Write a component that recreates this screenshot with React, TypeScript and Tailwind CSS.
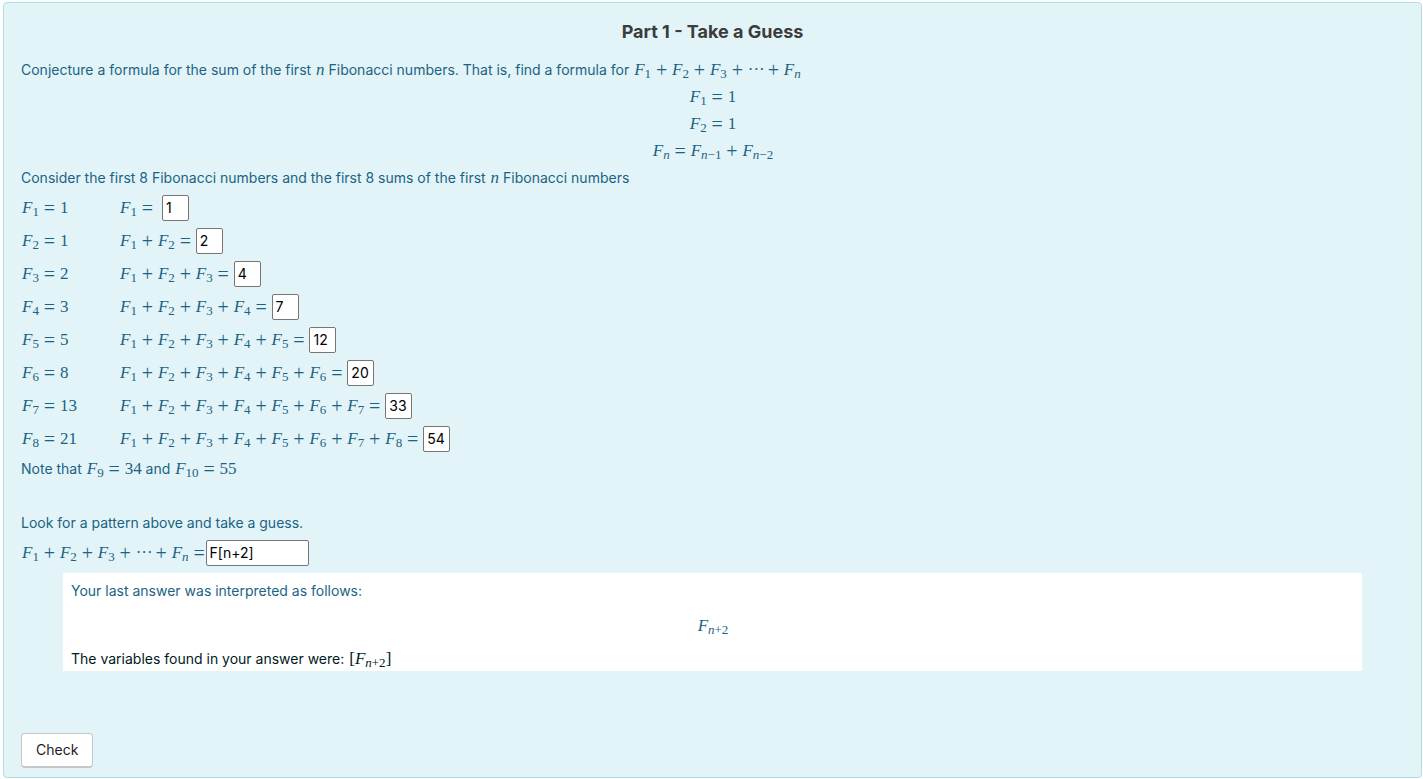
import { Fragment, useState, FormEvent, ReactNode } from "react";

const FIBONACCI = [1, 1, 2, 3, 5, 8, 13, 21];

function Op({ children }: { children: ReactNode }) {
  return (
    <span className="inline-block w-[21px] text-center align-[-2px] text-[20px] leading-none not-italic">
      {children}
    </span>
  );
}

function F({ sub }: { sub: ReactNode }) {
  return (
    <>
      <i>F</i>
      <sub className="bottom-[-3px] text-[13px]">{sub}</sub>
    </>
  );
}

function Math({ children }: { children: ReactNode }) {
  return (
    <span className="pl-px font-['Liberation_Serif',serif] text-[17px] leading-none whitespace-nowrap">
      {children}
    </span>
  );
}

function Sum({ count }: { count: number }) {
  return (
    <>
      {Array.from({ length: count }, (_, i) => (
        <Fragment key={i}>
          {i > 0 && <Op>+</Op>}
          <F sub={i + 1} />
        </Fragment>
      ))}
    </>
  );
}

function SumToN() {
  return (
    <>
      <Sum count={3} />
      <Op>+</Op>
      <span className="inline-block w-[15px] text-center">···</span>
      <Op>+</Op>
      <F sub={<i>n</i>} />
    </>
  );
}

const inputClass =
  "h-[26px] rounded-[2px] border border-[#767676] bg-white pl-[3px] text-sm text-black outline-none focus:border-[#1a6385]";

export default function App() {
  const [sums, setSums] = useState(["1", "2", "4", "7", "12", "20", "33", "54"]);
  const [guess, setGuess] = useState("F[n+2]");

  function handleSubmit(e: FormEvent) {
    e.preventDefault();
  }

  return (
    <form
      onSubmit={handleSubmit}
      className="mt-[2px] mr-px mb-px ml-[3px] rounded border border-[#abe1e4] bg-[#e2f4f7] px-[17px] pt-[15px] pb-[9px] font-[Inter,sans-serif] text-sm leading-[27px] text-[#1a6385]"
    >
      <h1 className="mb-[10px] text-center text-lg leading-7 font-bold text-[#3c3c3c]">
        Part 1 - Take a Guess
      </h1>

      <p>
        Conjecture a formula for the sum of the first{" "}
        <Math>
          <i>n</i>
        </Math>{" "}
        Fibonacci numbers. That is, find a formula for{" "}
        <Math>
          <SumToN />
        </Math>
      </p>
      <div className="text-center">
        <p>
          <Math>
            <F sub="1" />
            <Op>=</Op>1
          </Math>
        </p>
        <p>
          <Math>
            <F sub="2" />
            <Op>=</Op>1
          </Math>
        </p>
        <p>
          <Math>
            <F sub={<i>n</i>} />
            <Op>=</Op>
            <F sub={<><i>n</i>−1</>} />
            <Op>+</Op>
            <F sub={<><i>n</i>−2</>} />
          </Math>
        </p>
      </div>
      <p>
        Consider the first 8 Fibonacci numbers and the first 8 sums of the first{" "}
        <Math>
          <i>n</i>
        </Math>{" "}
        Fibonacci numbers
      </p>

      {FIBONACCI.map((value, i) => (
        <div key={i} className="flex h-[33px] items-center">
          <span className="w-[98px]">
            <Math>
              <F sub={i + 1} />
              <Op>=</Op>
              {value}
            </Math>
          </span>
          <label htmlFor={`sum-${i + 1}`} className={i === 0 ? "mr-1" : ""}>
            <Math>
              <Sum count={i + 1} />
              <Op>=</Op>
            </Math>
          </label>
          <input
            id={`sum-${i + 1}`}
            type="text"
            value={sums[i]}
            onChange={(e) => setSums(sums.map((s, j) => (j === i ? e.target.value : s)))}
            className={`w-[27px] ${inputClass}`}
          />
        </div>
      ))}

      <p>
        Note that{" "}
        <Math>
          <F sub="9" />
          <Op>=</Op>34
        </Math>{" "}
        and{" "}
        <Math>
          <F sub="10" />
          <Op>=</Op>55
        </Math>
      </p>

      <p className="mt-[27px]">Look for a pattern above and take a guess.</p>
      <div className="flex h-[33px] items-center">
        <label htmlFor="guess" className="-mr-1">
          <Math>
            <SumToN />
            <Op>=</Op>
          </Math>
        </label>
        <input
          id="guess"
          type="text"
          value={guess}
          onChange={(e) => setGuess(e.target.value)}
          className={`w-[103px] ${inputClass}`}
        />
      </div>

      <div className="mx-[42px] mt-1 bg-white px-2 pt-1">
        <p>Your last answer was interpreted as follows:</p>
        <p className="py-2 text-center">
          <Math>
            <F sub={<><i>n</i>+2</>} />
          </Math>
        </p>
        <p className="leading-6 text-[#001a1e]">
          The variables found in your answer were:{" "}
          <Math>
            [<F sub={<><i>n</i>+2</>} />]
          </Math>
        </p>
      </div>

      <button
        type="submit"
        className="mt-[62px] block h-[35px] rounded border border-b-2 border-[#c4c8c9] bg-white px-3.5 leading-5 text-[#1d2125]"
      >
        Check
      </button>
    </form>
  );
}
